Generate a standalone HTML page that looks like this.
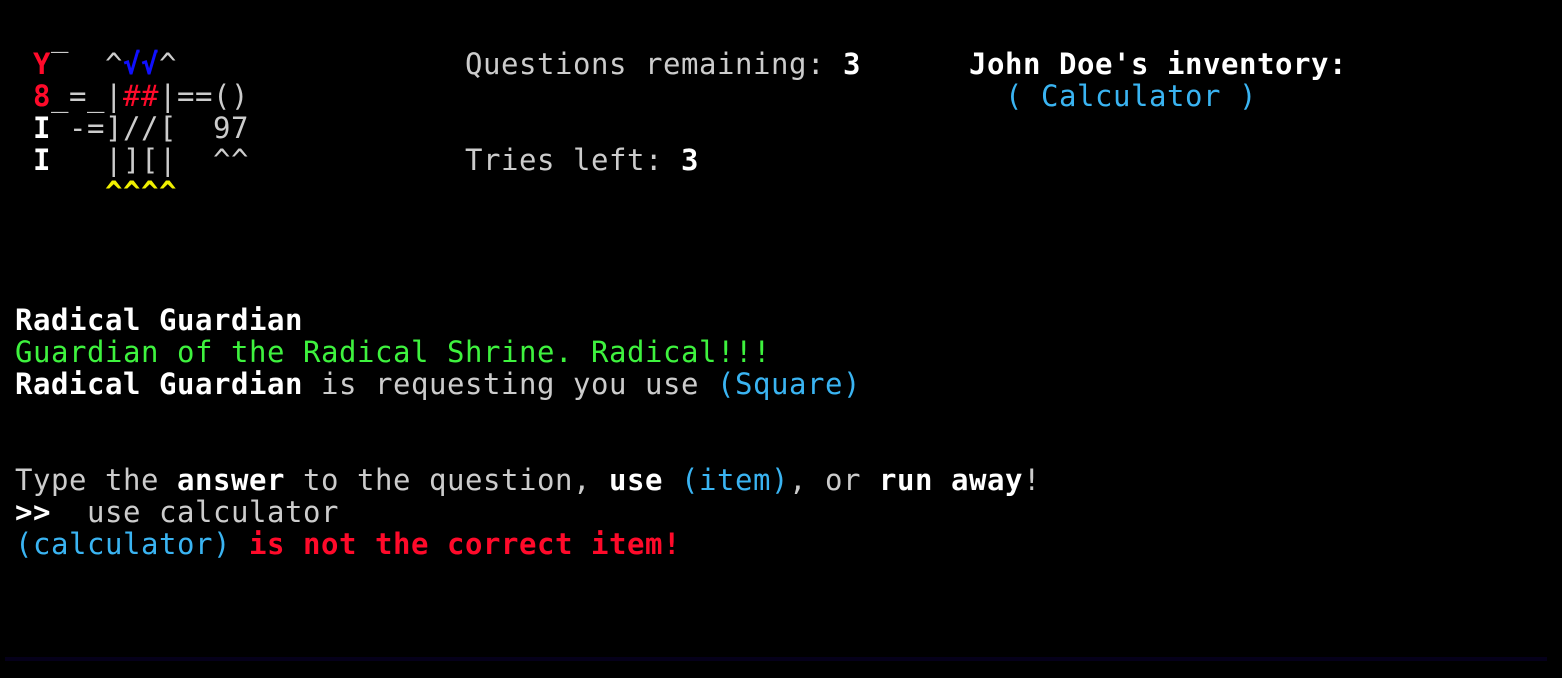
<!DOCTYPE html>
<html><head><style>
html,body{margin:0;padding:0;background:#000;width:1562px;height:678px;overflow:hidden}
pre{margin:0;position:absolute;left:15px;top:48px;font-family:"DejaVu Sans Mono","Liberation Mono",monospace;font-size:29px;letter-spacing:0.54px;line-height:32px;color:#cccccc}
b{color:#fff}
.g{color:#3ef23e}.c{color:#3ab4f2}.r{color:#ff0a2a}.y{color:#f0f000}.bl{color:#1010ff}.w{color:#fff;font-weight:bold}
.bar{position:absolute;left:5px;top:657px;width:1542px;height:4px;background:#05001a}
</style></head><body>
<pre> <b class="r">Y</b>‾  ^<b class="bl">√√</b>^                <span>Questions remaining: </span><b>3</b>      <b>John Doe's inventory:</b>
 <b class="r">8</b>_=_|<span class="r">##</span>|==()                                          <span class="c">( Calculator )</span>
 <b>I</b> -=]//[  97
 <b>I</b>   |][|  ^^            Tries left: <b>3</b>
     <b class="y">^^^^</b>



<b>Radical Guardian</b>
<span class="g">Guardian of the Radical Shrine. Radical!!!</span>
<b>Radical Guardian</b> is requesting you use <span class="c">(Square)</span>


Type the <b>answer</b> to the question, <b>use</b> <span class="c">(item)</span>, or <b>run away</b>!
<b>&gt;&gt;</b>  use calculator
<span class="c">(calculator)</span> <b class="r">is not the correct item!</b></pre>
<div class="bar"></div>
</body></html>
